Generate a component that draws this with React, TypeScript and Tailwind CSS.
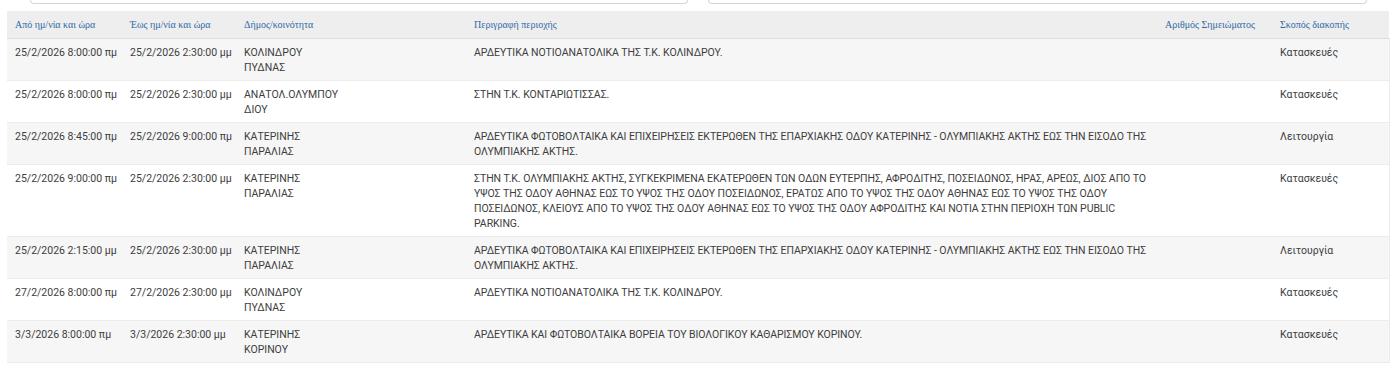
import React from "react";

const rows = [
  { from: "25/2/2026 8:00:00 πμ", to: "25/2/2026 2:30:00 μμ", area: ["ΚΟΛΙΝΔΡΟΥ", "ΠΥΔΝΑΣ"], desc: "ΑΡΔΕΥΤΙΚΑ ΝΟΤΙΟΑΝΑΤΟΛΙΚΑ ΤΗΣ Τ.Κ. ΚΟΛΙΝΔΡΟΥ.", num: "", reason: "Κατασκευές" },
  { from: "25/2/2026 8:00:00 πμ", to: "25/2/2026 2:30:00 μμ", area: ["ΑΝΑΤΟΛ.ΟΛΥΜΠΟΥ", "ΔΙΟΥ"], desc: "ΣΤΗΝ Τ.Κ. ΚΟΝΤΑΡΙΩΤΙΣΣΑΣ.", num: "", reason: "Κατασκευές" },
  { from: "25/2/2026 8:45:00 πμ", to: "25/2/2026 9:00:00 πμ", area: ["ΚΑΤΕΡΙΝΗΣ", "ΠΑΡΑΛΙΑΣ"], desc: "ΑΡΔΕΥΤΙΚΑ ΦΩΤΟΒΟΛΤΑΙΚΑ ΚΑΙ ΕΠΙΧΕΙΡΗΣΕΙΣ ΕΚΤΕΡΩΘΕΝ ΤΗΣ ΕΠΑΡΧΙΑΚΗΣ ΟΔΟΥ ΚΑΤΕΡΙΝΗΣ - ΟΛΥΜΠΙΑΚΗΣ ΑΚΤΗΣ ΕΩΣ ΤΗΝ ΕΙΣΟΔΟ ΤΗΣ ΟΛΥΜΠΙΑΚΗΣ ΑΚΤΗΣ.", num: "", reason: "Λειτουργία" },
  { from: "25/2/2026 9:00:00 πμ", to: "25/2/2026 2:30:00 μμ", area: ["ΚΑΤΕΡΙΝΗΣ", "ΠΑΡΑΛΙΑΣ"], desc: "ΣΤΗΝ Τ.Κ. ΟΛΥΜΠΙΑΚΗΣ ΑΚΤΗΣ, ΣΥΓΚΕΚΡΙΜΕΝΑ ΕΚΑΤΕΡΩΘΕΝ ΤΩΝ ΟΔΩΝ ΕΥΤΕΡΠΗΣ, ΑΦΡΟΔΙΤΗΣ, ΠΟΣΕΙΔΩΝΟΣ, ΗΡΑΣ, ΑΡΕΩΣ, ΔΙΟΣ ΑΠΟ ΤΟ ΥΨΟΣ ΤΗΣ ΟΔΟΥ ΑΘΗΝΑΣ ΕΩΣ ΤΟ ΥΨΟΣ ΤΗΣ ΟΔΟΥ ΠΟΣΕΙΔΩΝΟΣ, ΕΡΑΤΩΣ ΑΠΟ ΤΟ ΥΨΟΣ ΤΗΣ ΟΔΟΥ ΑΘΗΝΑΣ ΕΩΣ ΤΟ ΥΨΟΣ ΤΗΣ ΟΔΟΥ ΠΟΣΕΙΔΩΝΟΣ, ΚΛΕΙΟΥΣ ΑΠΟ ΤΟ ΥΨΟΣ ΤΗΣ ΟΔΟΥ ΑΘΗΝΑΣ ΕΩΣ ΤΟ ΥΨΟΣ ΤΗΣ ΟΔΟΥ ΑΦΡΟΔΙΤΗΣ ΚΑΙ ΝΟΤΙΑ ΣΤΗΝ ΠΕΡΙΟΧΗ ΤΩΝ PUBLIC PARKING.", num: "", reason: "Κατασκευές" },
  { from: "25/2/2026 2:15:00 μμ", to: "25/2/2026 2:30:00 μμ", area: ["ΚΑΤΕΡΙΝΗΣ", "ΠΑΡΑΛΙΑΣ"], desc: "ΑΡΔΕΥΤΙΚΑ ΦΩΤΟΒΟΛΤΑΙΚΑ ΚΑΙ ΕΠΙΧΕΙΡΗΣΕΙΣ ΕΚΤΕΡΩΘΕΝ ΤΗΣ ΕΠΑΡΧΙΑΚΗΣ ΟΔΟΥ ΚΑΤΕΡΙΝΗΣ - ΟΛΥΜΠΙΑΚΗΣ ΑΚΤΗΣ ΕΩΣ ΤΗΝ ΕΙΣΟΔΟ ΤΗΣ ΟΛΥΜΠΙΑΚΗΣ ΑΚΤΗΣ.", num: "", reason: "Λειτουργία" },
  { from: "27/2/2026 8:00:00 πμ", to: "27/2/2026 2:30:00 μμ", area: ["ΚΟΛΙΝΔΡΟΥ", "ΠΥΔΝΑΣ"], desc: "ΑΡΔΕΥΤΙΚΑ ΝΟΤΙΟΑΝΑΤΟΛΙΚΑ ΤΗΣ Τ.Κ. ΚΟΛΙΝΔΡΟΥ.", num: "", reason: "Κατασκευές" },
  { from: "3/3/2026 8:00:00 πμ", to: "3/3/2026 2:30:00 μμ", area: ["ΚΑΤΕΡΙΝΗΣ", "ΚΟΡΙΝΟΥ"], desc: "ΑΡΔΕΥΤΙΚΑ ΚΑΙ ΦΩΤΟΒΟΛΤΑΙΚΑ ΒΟΡΕΙΑ ΤΟΥ ΒΙΟΛΟΓΙΚΟΥ ΚΑΘΑΡΙΣΜΟΥ ΚΟΡΙΝΟΥ.", num: "", reason: "Κατασκευές" },
];

const headers = [
  "Από ημ/νία και ώρα",
  "Έως ημ/νία και ώρα",
  "Δήμος/κοινότητα",
  "Περιγραφή περιοχής",
  "Αριθμός Σημειώματος",
  "Σκοπός διακοπής",
];

export default function App() {
  return (
    <div className="w-[1400px] h-[383px] bg-white overflow-hidden">
      <div className="flex h-[4px] pl-[30px] gap-[20px]">
        <div className="w-[658px] h-[4px] border border-t-0 border-[#d6d6d6] rounded-b-[4px]" />
        <div className="w-[659px] h-[4px] border border-t-0 border-[#d6d6d6] rounded-b-[4px]" />
      </div>
      <div className="pl-[7px] pt-[7px]">
        <table className="w-[1382px] table-fixed border-collapse text-[10.5px] leading-[15px] text-[#3d3d3d] [font-family:Roboto,'Noto_Sans',sans-serif]">
          <colgroup>
            <col className="w-[115px]" />
            <col className="w-[114px]" />
            <col className="w-[230px]" />
            <col className="w-[691px]" />
            <col className="w-[115px]" />
            <col className="w-[117px]" />
          </colgroup>
          <thead>
            <tr className="bg-[#eeeeee] h-[27px] border-b border-[#dddddd]">
              {headers.map((h) => (
                <th
                  key={h}
                  className="px-[8px] font-normal text-left text-[10px] text-[#2f6aa6] [font-family:'Liberation_Serif',serif] whitespace-nowrap"
                >
                  {h}
                </th>
              ))}
            </tr>
          </thead>
          <tbody>
            {rows.map((r, i) => (
              <tr key={i} className={`${i % 2 === 0 ? "bg-[#f6f6f6]" : "bg-white"} border-b border-[#ececec] align-top`}>
                <td className="px-[8px] pt-[6px] pb-[5px] whitespace-nowrap">{r.from}</td>
                <td className="px-[8px] pt-[6px] pb-[5px] whitespace-nowrap">{r.to}</td>
                <td className="px-[8px] pt-[6px] pb-[5px]">
                  {r.area[0]}
                  <br />
                  {r.area[1]}
                </td>
                <td className="pl-[8px] pr-0 pt-[6px] pb-[5px] tracking-[-0.06px]">{r.desc}</td>
                <td className="px-[8px] pt-[6px] pb-[5px]">{r.num}</td>
                <td className="px-[8px] pt-[6px] pb-[5px] border-r border-[#ececec]">{r.reason}</td>
              </tr>
            ))}
          </tbody>
        </table>
      </div>
    </div>
  );
}
